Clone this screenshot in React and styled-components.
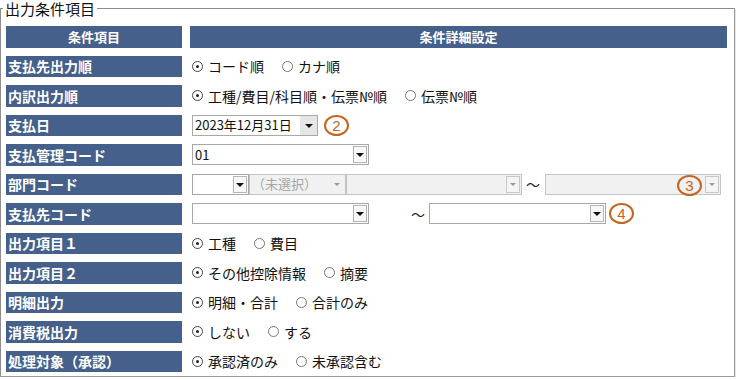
import React from "react";
import styled, { createGlobalStyle } from "styled-components";

const GlobalStyle = createGlobalStyle`
  html, body { margin: 0; padding: 0; background: #ffffff; }
  body { font-family: "Noto Sans CJK JP", "Noto Sans", sans-serif; color: #000; }
`;

const Fieldset = styled.fieldset`
  box-sizing: border-box;
  width: 735px;
  margin: 0;
  padding: 9px 5px 4px 5px;
  border-style: solid;
  border-width: 1px;
  border-color: #8c8c8c #9a9a9a #9a9a9a #8c8c8c;
  box-shadow: inset 1px 1px 0 #ffffff, 1px 1px 0 #e6e6e6;
`;

const Legend = styled.legend`
  margin-left: -3px;
  padding: 0 2px;
  font-size: 15px;
  line-height: 17px;
  color: #111;
`;

const Grid = styled.div`
  display: grid;
  grid-template-columns: 176px 537px;
  grid-auto-rows: 21.5px;
  column-gap: 8px;
  row-gap: 8px;
`;

const HeadCell = styled.div`
  background: #45608a;
  color: #fff;
  font-weight: 700;
  font-size: 13px;
  display: flex;
  align-items: center;
  justify-content: center;
`;

const LabelCell = styled.div`
  background: #45608a;
  color: #fff;
  font-weight: 700;
  font-size: 14px;
  display: flex;
  align-items: center;
  padding-left: 2px;
  white-space: nowrap;
`;

const DetailCell = styled.div`
  display: flex;
  align-items: center;
  padding-left: 2px;
  font-size: 14px;
  white-space: nowrap;
`;

const RadioGroup = styled.div`
  display: flex;
  align-items: center;
  gap: 18px;
`;

const Option = styled.label`
  display: flex;
  align-items: center;
  gap: 5px;
  font-size: 14px;
  line-height: 16px;
  color: #111;
`;

const RadioMark = styled.span`
  box-sizing: border-box;
  width: 11px;
  height: 11px;
  border-radius: 50%;
  border: 1px solid ${(p) => (p.$checked ? "#444" : "#777")};
  display: flex;
  align-items: center;
  justify-content: center;
  &::after {
    content: "";
    width: 3px;
    height: 3px;
    border-radius: 50%;
    background: #222;
    display: ${(p) => (p.$checked ? "block" : "none")};
  }
`;

const Select = styled.div`
  position: relative;
  box-sizing: border-box;
  width: ${(p) => p.$width}px;
  height: ${(p) => p.$height || 21}px;
  border: 1px solid ${(p) => (p.$disabled ? "#c4c4c4" : "#a8a8a8")};
  background: ${(p) => (p.$disabled ? "#f1f1f1" : "#fff")};
  display: flex;
  align-items: center;
  justify-content: space-between;
  padding: 1px;
  flex: none;
`;

const SelectText = styled.span`
  font-size: 13px;
  line-height: 16px;
  padding-left: 1px;
  color: ${(p) => (p.$muted ? "#a6a6a6" : "#111")};
  font-family: "Noto Sans CJK JP", sans-serif;
`;

const ArrowBox = styled.span`
  box-sizing: border-box;
  align-self: stretch;
  width: ${(p) => (p.$plain ? 17 : 14)}px;
  display: flex;
  align-items: center;
  justify-content: center;
  border: ${(p) => (p.$plain || p.$bare ? "none" : `1px solid ${p.$disabled ? "#c8c8c8" : "#b5b5b5"}`)};
  background: ${(p) => (p.$plain ? "#e6e6e6" : p.$bare ? "transparent" : p.$disabled ? "#f4f4f4" : "#f7f7f7")};
  margin: ${(p) => (p.$plain ? "-1px" : "0")};
`;

const Triangle = styled.span`
  width: 0;
  height: 0;
  border-left: ${(p) => (p.$small ? 3 : 4)}px solid transparent;
  border-right: ${(p) => (p.$small ? 3 : 4)}px solid transparent;
  border-top: ${(p) => (p.$small ? 3 : 4)}px solid ${(p) => (p.$muted ? "#9a9a9a" : "#111")};
  margin-top: 1px;
`;

const Tilde = styled.span`
  font-size: 14px;
  color: #222;
  margin: ${(p) => p.$margin};
`;

const Marker = styled.span`
  box-sizing: border-box;
  width: 25px;
  height: 21px;
  border: 2px solid #c3651f;
  border-radius: 50%;
  color: #c3651f;
  font-family: "Liberation Sans", Arial, sans-serif;
  font-size: 15px;
  line-height: 17px;
  text-align: center;
  flex: none;
  margin-left: ${(p) => p.$gap || 4}px;
  ${(p) =>
    p.$overlay
      ? `position: absolute; right: ${p.$right}px; top: 0px; margin: 0; background: transparent;`
      : ""}
`;

const Radios = ({ options }) => (
  <RadioGroup>
    {options.map((o, i) => (
      <Option key={o}>
        <RadioMark $checked={i === 0} />
        {o}
      </Option>
    ))}
  </RadioGroup>
);

const Dropdown = ({ width, text, muted, disabled, arrow = "box", children }) => (
  <Select $width={width} $disabled={disabled}>
    <SelectText $muted={muted}>{text}</SelectText>
    {children}
    {arrow === "plain" && (
      <ArrowBox $plain>
        <Triangle />
      </ArrowBox>
    )}
    {arrow === "box" && (
      <ArrowBox $disabled={disabled}>
        <Triangle $small={disabled} $muted={disabled} />
      </ArrowBox>
    )}
    {arrow === "bare" && (
      <ArrowBox $bare>
        <Triangle $small $muted />
      </ArrowBox>
    )}
  </Select>
);

export default function App() {
  return (
    <>
      <GlobalStyle />
      <Fieldset>
        <Legend>出力条件項目</Legend>
        <Grid>
          <HeadCell>条件項目</HeadCell>
          <HeadCell>条件詳細設定</HeadCell>

          <LabelCell>支払先出力順</LabelCell>
          <DetailCell>
            <Radios options={["コード順", "カナ順"]} />
          </DetailCell>

          <LabelCell>内訳出力順</LabelCell>
          <DetailCell>
            <Radios options={["工種/費目/科目順・伝票№順", "伝票№順"]} />
          </DetailCell>

          <LabelCell>支払日</LabelCell>
          <DetailCell>
            <Dropdown width={126} text="2023年12月31日" arrow="plain" />
            <Marker $gap={6}>2</Marker>
          </DetailCell>

          <LabelCell>支払管理コード</LabelCell>
          <DetailCell>
            <Dropdown width={177} text="01" />
          </DetailCell>

          <LabelCell>部門コード</LabelCell>
          <DetailCell>
            <Dropdown width={57} text="" />
            <Dropdown width={97} text="（未選択）" muted disabled arrow="bare" />
            <Dropdown width={176} text="" disabled />
            <Tilde $margin="0 5px 0 4px">～</Tilde>
            <Dropdown width={176} text="" disabled>
              <Marker $overlay $right={18}>3</Marker>
            </Dropdown>
          </DetailCell>

          <LabelCell>支払先コード</LabelCell>
          <DetailCell>
            <Dropdown width={177} text="" />
            <Tilde $margin="0 4px 0 42px">～</Tilde>
            <Dropdown width={177} text="" />
            <Marker $gap={3}>4</Marker>
          </DetailCell>

          <LabelCell>出力項目１</LabelCell>
          <DetailCell>
            <Radios options={["工種", "費目"]} />
          </DetailCell>

          <LabelCell>出力項目２</LabelCell>
          <DetailCell>
            <Radios options={["その他控除情報", "摘要"]} />
          </DetailCell>

          <LabelCell>明細出力</LabelCell>
          <DetailCell>
            <Radios options={["明細・合計", "合計のみ"]} />
          </DetailCell>

          <LabelCell>消費税出力</LabelCell>
          <DetailCell>
            <Radios options={["しない", "する"]} />
          </DetailCell>

          <LabelCell>処理対象（承認）</LabelCell>
          <DetailCell>
            <Radios options={["承認済のみ", "未承認含む"]} />
          </DetailCell>
        </Grid>
      </Fieldset>
    </>
  );
}
